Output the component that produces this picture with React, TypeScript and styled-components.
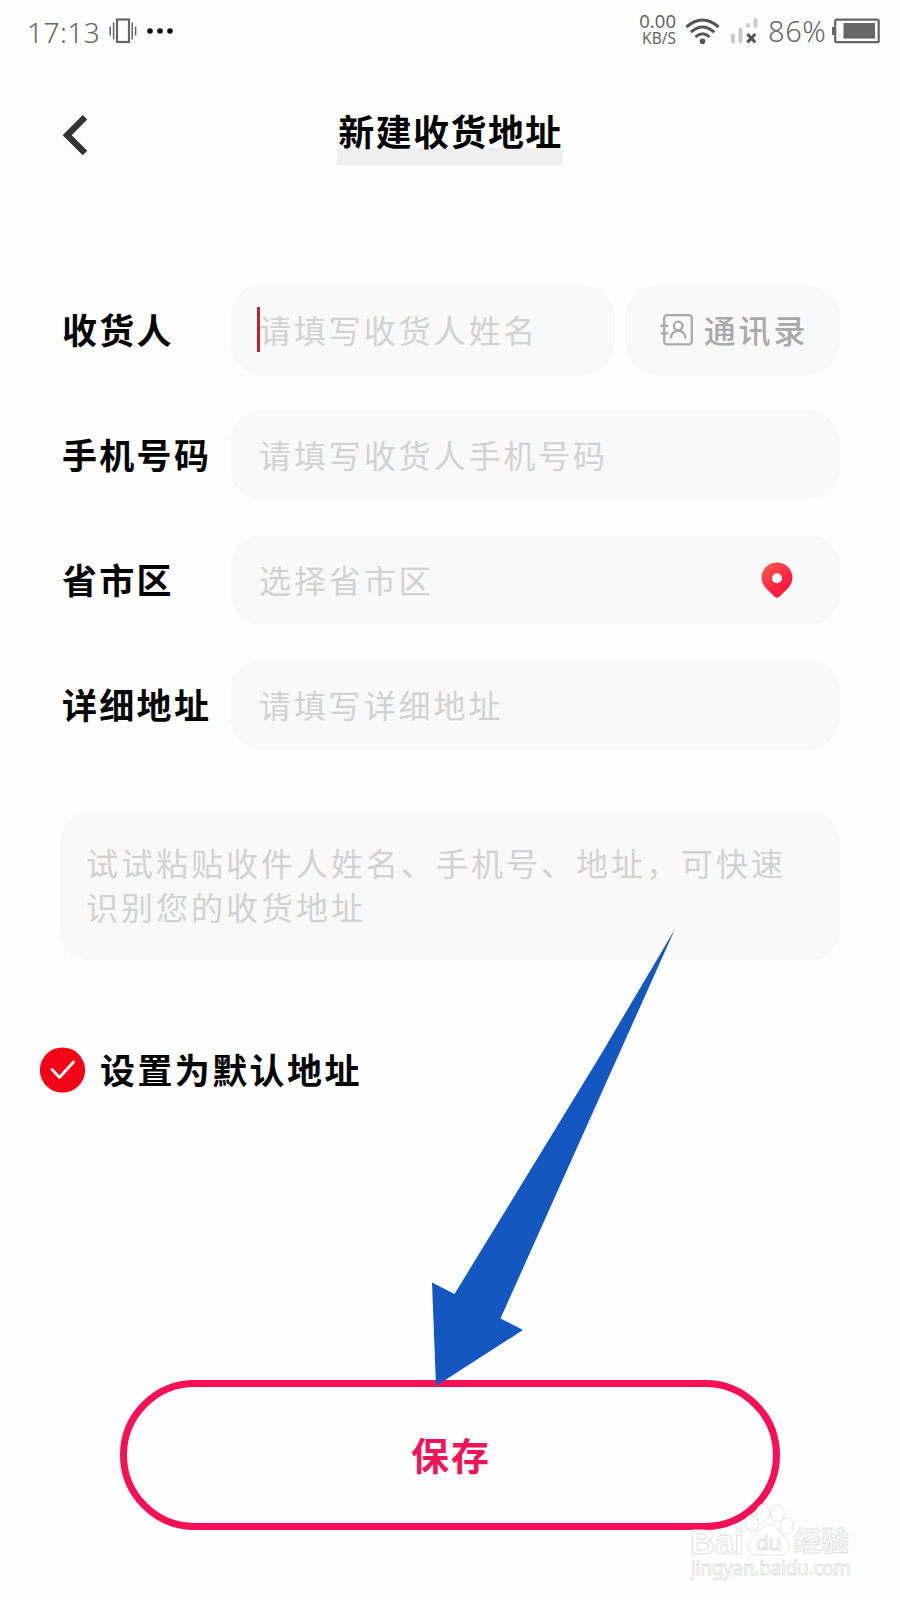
import React from "react";
import styled, { createGlobalStyle } from "styled-components";

const GlobalStyle = createGlobalStyle`
  * { box-sizing: border-box; }
  body { margin: 0; background: #fefefe; }
`;

const Page = styled.main`
  position: relative;
  display: flex;
  flex-direction: column;
  width: 900px;
  height: 1600px;
  overflow: hidden;
  background: #fefefe;
  color: #050505;
  font-family: "Noto Sans CJK SC", sans-serif;
`;

const StatusBar = styled.div`
  display: flex;
  justify-content: space-between;
  align-items: center;
  height: 62px;
  padding: 0 20px 0 27px;
  color: #666;
  font-family: "Noto Sans", sans-serif;
`;

const StatusGroup = styled.div`
  display: flex;
  align-items: center;
`;

const Clock = styled.span`
  width: 82px;
  padding-top: 1px;
  font-size: 28px;
  font-weight: 300;
  line-height: 40px;
  letter-spacing: 0.5px;
`;

const NetSpeed = styled.div`
  display: flex;
  flex-direction: column;
  align-items: flex-end;
  width: 42px;
  margin: 0 9px 2px 0;
  font-size: 18.5px;
  line-height: 16px;
  white-space: nowrap;
`;

const SpeedValue = styled.span`
  height: 17px;
`;

const SpeedUnit = styled.span`
  font-size: 15.5px;
  line-height: 17px;
`;

const Percent = styled.span`
  width: 64px;
  margin-left: 9px;
  font-size: 29px;
  font-weight: 300;
  line-height: 40px;
  letter-spacing: 0.6px;
`;

const Header = styled.header`
  display: grid;
  grid-template-columns: 60px 1fr 60px;
  align-items: start;
  height: 223px;
  padding: 46px 60px 0;
`;

const BackButton = styled.button`
  display: flex;
  margin-top: 5px;
  padding: 0;
  border: 0;
  background: none;
`;

const Title = styled.h1`
  justify-self: center;
  height: 57px;
  margin: 0;
  padding-left: 1px;
  font-size: 36px;
  font-weight: 700;
  line-height: 44px;
  letter-spacing: 1.4px;
  background: linear-gradient(#efefef, #efefef) 0 40px / 100% 17px no-repeat;
`;

const Form = styled.section`
  display: flex;
  flex-direction: column;
  gap: 35.5px;
  padding: 0 60px;
`;

const Row = styled.div`
  display: flex;
  align-items: center;
  height: 89.5px;
`;

const Label = styled.span`
  width: 170px;
  padding: 0 0 2px 2px;
  font-size: 35px;
  font-weight: 700;
  line-height: 50px;
  letter-spacing: 2.3px;
  white-space: nowrap;
`;

const Field = styled.div`
  display: flex;
  flex: 1;
  align-items: center;
  justify-content: space-between;
  height: 100%;
  padding: 0 47px 0 27px;
  border-radius: 32px;
  background: #f9f9f9;
`;

const Placeholder = styled.span<{ $focused?: boolean }>`
  color: #d2d2d2;
  font-size: 32px;
  line-height: 45px;
  letter-spacing: 2.9px;
  white-space: nowrap;
  padding-left: 2px;
  box-shadow: ${(p) => (p.$focused ? "inset 3px 0 #bd2433" : "none")};
`;

const ContactsButton = styled.button`
  display: flex;
  align-items: center;
  justify-content: center;
  gap: 11px;
  width: 215px;
  height: 100%;
  margin-left: 10px;
  padding: 0 0 0 3px;
  border: 0;
  border-radius: 32px;
  background: #f9f9f9;
  color: #a9a9a9;
  font: 500 32px/45px "Noto Sans CJK SC", sans-serif;
  letter-spacing: 2.9px;
`;

const PasteBox = styled.div`
  height: 149px;
  margin: 61px 60px 0;
  padding: 29px 26px;
  border-radius: 30px;
  background: #f9f9f9;
  color: #d2d2d2;
  font-size: 32px;
  line-height: 44px;
  letter-spacing: 3px;
  white-space: nowrap;
`;

const DefaultRow = styled.div`
  display: flex;
  align-items: center;
  gap: 15px;
  height: 46px;
  margin: 87px 0 0 40px;
  font-size: 35px;
  font-weight: 700;
  line-height: 46px;
  letter-spacing: 2.4px;
`;

const DefaultText = styled.span`
  padding-bottom: 2px;
`;

const SaveButton = styled.button`
  width: 660px;
  height: 150px;
  margin: 287px auto 0;
  padding: 0 0 2px 2px;
  border: 7.5px solid #f81057;
  border-radius: 75px;
  background: transparent;
  color: #f0145a;
  font: 700 38px/50px "Noto Sans CJK SC", sans-serif;
  letter-spacing: 2px;
`;

const Arrow = styled.svg`
  position: absolute;
  left: 425px;
  top: 925px;
`;

const Watermark = styled.svg`
  position: absolute;
  left: 680px;
  top: 1495px;
`;

const Dots = styled.svg`
  margin-left: 10px;
`;

const Signal = styled.svg`
  margin-left: 10px;
`;

const VibrateIcon = () => (
  <svg width="28" height="26" viewBox="0 0 28 26" fill="none" stroke="#666">
    <rect x="8" y="1.5" width="12" height="22.5" strokeWidth="2.2" />
    <path d="M1.2 8.5v9M4.6 4.5v17M23.2 4.5v17M26.6 8.5v9" strokeWidth="1.5" />
  </svg>
);

const DotsIcon = () => (
  <Dots width="26" height="6" viewBox="0 0 26 6" fill="#111">
    <circle cx="3" cy="3" r="2.8" />
    <circle cx="13" cy="3" r="2.8" />
    <circle cx="23" cy="3" r="2.8" />
  </Dots>
);

const WifiIcon = () => (
  <svg width="35" height="27" viewBox="0 0 35 27" fill="none" stroke="#555" strokeWidth="3">
    <path d="M1.4 9Q17.5 -5 33.6 9M5.8 14.2Q17.5 3.8 29.2 14.2M10.4 19Q17.5 12.6 24.6 19" />
    <circle cx="17.5" cy="23.3" r="2.8" fill="#555" stroke="none" />
  </svg>
);

const SignalIcon = () => (
  <Signal width="29" height="28" viewBox="0 0 29 28" fill="none">
    <path d="M3 18.5v6M10.5 12.5v12M18 8v.8M25.5 3v6" stroke="#c9c9c9" strokeWidth="4" strokeLinecap="round" />
    <path d="M17.3 17l8 8.4M25.3 17l-8 8.4" stroke="#555" strokeWidth="3" />
  </Signal>
);

const BatteryIcon = () => (
  <svg width="48" height="26" viewBox="0 0 48 26">
    <path d="M0 9h3v8H0z" fill="#666" />
    <rect x="3.2" y="1.6" width="43.5" height="22.6" rx="1.5" fill="none" stroke="#666" strokeWidth="2.2" />
    <rect x="11.5" y="5" width="31.5" height="15.6" fill="#666" />
  </svg>
);

const BackIcon = () => (
  <svg width="30" height="42" viewBox="0 0 30 42" fill="none" stroke="#333" strokeWidth="6.4">
    <path d="M25 4.2L7.2 22.2l17.8 17.8" />
  </svg>
);

const ContactsIcon = () => (
  <svg width="33" height="32" viewBox="0 0 33 32" fill="none" stroke="#a9a9a9" strokeWidth="2.3">
    <rect x="4.2" y="1.2" width="27.6" height="29.2" rx="3" />
    <path d="M.6 11.8h7.8M.6 19.4h7.8" />
    <circle cx="18.2" cy="12" r="4.3" />
    <path d="M11 24.5c0-4.8 3-7.7 7.2-7.7s7.2 2.9 7.2 7.7" />
  </svg>
);

const PinIcon = () => (
  <svg width="32" height="36" viewBox="0 0 32 36">
    <defs>
      <linearGradient id="pin" x1="0" y1="0" x2="0.8" y2="1">
        <stop offset="0" stopColor="#fb6150" />
        <stop offset="0.65" stopColor="#ff2341" />
        <stop offset="1" stopColor="#ff1239" />
      </linearGradient>
    </defs>
    <path
      d="M16 .5C7.4.5.6 7.2.6 15.5c0 5.5 2.8 9.3 6.1 12.4l7.300 7c1.200 1 2.800 1 4 0l7.300-7c3.300-3.100 6.100-6.900 6.100-12.400C31.400 7.200 24.600.5 16 .5z"
      fill="url(#pin)"
    />
    <circle cx="16" cy="16.2" r="5" fill="#fff" />
  </svg>
);

const CheckIcon = () => (
  <svg width="45" height="46" viewBox="0 0 45 46">
    <circle cx="22.5" cy="23" r="22.6" fill="#f40417" />
    <path d="M12 22.5l7.5 8 14-15.5" fill="none" stroke="#fff" strokeWidth="2.8" strokeLinecap="round" strokeLinejoin="round" />
  </svg>
);

export default function App() {
  return (
    <Page>
      <GlobalStyle />
      <StatusBar>
        <StatusGroup>
          <Clock>17:13</Clock>
          <VibrateIcon />
          <DotsIcon />
        </StatusGroup>
        <StatusGroup>
          <NetSpeed>
            <SpeedValue>0.00</SpeedValue>
            <SpeedUnit>KB/S</SpeedUnit>
          </NetSpeed>
          <WifiIcon />
          <SignalIcon />
          <Percent>86%</Percent>
          <BatteryIcon />
        </StatusGroup>
      </StatusBar>

      <Header>
        <BackButton aria-label="返回">
          <BackIcon />
        </BackButton>
        <Title>新建收货地址</Title>
      </Header>

      <Form>
        <Row>
          <Label>收货人</Label>
          <Field>
            <Placeholder $focused>请填写收货人姓名</Placeholder>
          </Field>
          <ContactsButton>
            <ContactsIcon />
            <span>通讯录</span>
          </ContactsButton>
        </Row>
        <Row>
          <Label>手机号码</Label>
          <Field>
            <Placeholder>请填写收货人手机号码</Placeholder>
          </Field>
        </Row>
        <Row>
          <Label>省市区</Label>
          <Field>
            <Placeholder>选择省市区</Placeholder>
            <PinIcon />
          </Field>
        </Row>
        <Row>
          <Label>详细地址</Label>
          <Field>
            <Placeholder>请填写详细地址</Placeholder>
          </Field>
        </Row>
      </Form>

      <PasteBox>
        试试粘贴收件人姓名、手机号、地址，可快速
        <br />
        识别您的收货地址
      </PasteBox>

      <DefaultRow>
        <CheckIcon />
        <DefaultText>设置为默认地址</DefaultText>
      </DefaultRow>

      <SaveButton>保存</SaveButton>

      <Arrow width="260" height="465" viewBox="425 925 260 465">
        <path d="M675 929L500.5 1318.5L523 1330L436 1386L432 1282.5L454.5 1294L600 1056Z" fill="#1557c0" />
      </Arrow>

      <Watermark width="190" height="95" viewBox="680 1495 190 95">
        <g fill="#fff" fillOpacity="0.8" stroke="#e0e0e0" strokeWidth="0.9">
          <ellipse cx="751.7" cy="1523.5" rx="6.6" ry="8.2" transform="rotate(-12 751.7 1523.5)" />
          <ellipse cx="763" cy="1513" rx="6.8" ry="8.6" />
          <ellipse cx="777.5" cy="1513.5" rx="6.8" ry="8.6" transform="rotate(8 777.5 1513.5)" />
          <ellipse cx="786.5" cy="1526" rx="6.6" ry="8.2" transform="rotate(12 786.5 1526)" />
          <path d="M769 1524.5c-7 0-10 7-14.500 11.500c-5.500 5-8 9-5.500 14.500c3 6 11 4.500 20 4.500s16.500 1.500 19.500-4.500c2.500-5.500 0-9.500-5-14.500c-4.500-4.500-7.500-11.500-14.500-11.500z" />
          <text x="690" y="1553.5" fontFamily="Liberation Sans" fontWeight="700" fontSize="35" textLength="54" lengthAdjust="spacingAndGlyphs">Bai</text>
          <text x="756" y="1550" fontFamily="Liberation Sans" fontSize="21" textLength="25" lengthAdjust="spacingAndGlyphs">du</text>
          <text x="794" y="1551" fontFamily="Noto Sans CJK SC" fontWeight="700" fontSize="27.5" textLength="55">经验</text>
        </g>
        <text x="691" y="1575" fontFamily="Noto Sans" fontSize="19" textLength="160" fill="#fff" stroke="#e0e0e0" strokeWidth="0.8">jingyan.baidu.com</text>
      </Watermark>
    </Page>
  );
}
